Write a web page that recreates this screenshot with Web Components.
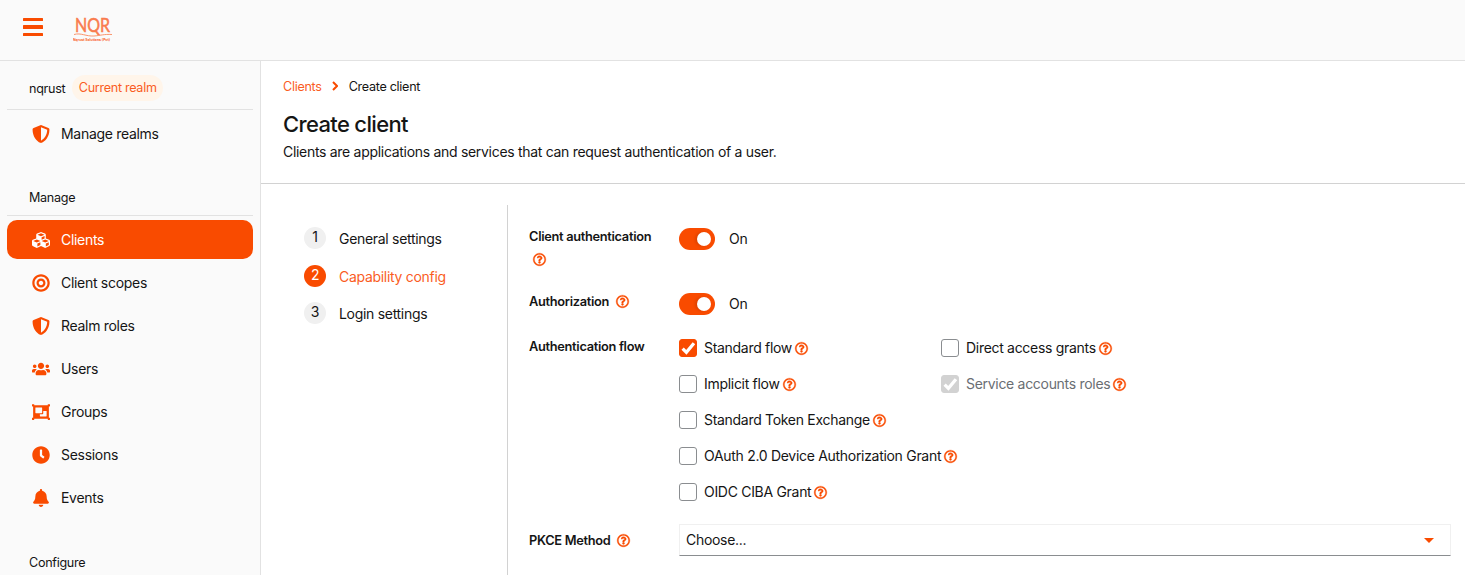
<!DOCTYPE html>
<html lang="en">
<head>
<meta charset="utf-8">
<title>Create client</title>
<style>
  html,body{margin:0;padding:0;height:575px;overflow:hidden;background:#fff}
  body{font:14px/21px Inter,"Liberation Sans",sans-serif;letter-spacing:-.3px;color:#151515;--o:#f94b00}
</style>
</head>
<body>
<app-shell>
  <top-bar slot="top"></top-bar>
  <side-nav slot="side">
    <realm-row name="nqrust" badge="Current realm"></realm-row>
    <nav-item icon="shield" lift>Manage realms</nav-item>
    <nav-heading>Manage</nav-heading>
    <nav-item icon="cubes" active>Clients</nav-item>
    <nav-item icon="bullseye">Client scopes</nav-item>
    <nav-item icon="shield">Realm roles</nav-item>
    <nav-item icon="users">Users</nav-item>
    <nav-item icon="group">Groups</nav-item>
    <nav-item icon="clock">Sessions</nav-item>
    <nav-item icon="bell">Events</nav-item>
    <nav-heading plain>Configure</nav-heading>
  </side-nav>
  <page-head slot="main" title="Create client" desc="Clients are applications and services that can request authentication of a user."></page-head>
  <wizard-body slot="main">
    <wizard-steps slot="steps">
      <wizard-step n="1">General settings</wizard-step>
      <wizard-step n="2" current>Capability config</wizard-step>
      <wizard-step n="3">Login settings</wizard-step>
    </wizard-steps>
    <form-area slot="form">
      <form-row label="Client authentication" tall wrap-help><toggle-switch>On</toggle-switch></form-row>
      <form-row label="Authorization"><toggle-switch>On</toggle-switch></form-row>
      <form-row label="Authentication flow" nohelp>
        <check-grid>
          <check-box checked>Standard flow</check-box>
          <check-box>Direct access grants</check-box>
          <check-box>Implicit flow</check-box>
          <check-box disabled>Service accounts roles</check-box>
          <check-box>Standard Token Exchange</check-box>
          <span></span>
          <check-box>OAuth 2.0 Device Authorization Grant</check-box>
          <span></span>
          <check-box>OIDC CIBA Grant</check-box>
        </check-grid>
      </form-row>
      <form-row label="PKCE Method" field><select-field>Choose...</select-field></form-row>
    </form-area>
  </wizard-body>
</app-shell>
<script>
const ICONS={
 shield:['0 0 512 512','M466.5 83.7l-192-80a48.15 48.15 0 0 0-36.9 0l-192 80C27.7 91.1 16 108.6 16 128c0 198.5 114.5 335.7 221.5 380.3 11.8 4.9 25.1 4.9 36.9 0C360.1 472.6 496 349.3 496 128c0-19.4-11.7-36.9-29.5-44.3zM256.1 446.3l-.1-381 175.9 73.3c-3.3 151.4-82.1 261.1-175.8 307.7z'],
 cubes:['0 0 512 512','M488.6 250.2L392 214V105.5c0-15-9.3-28.4-23.4-33.7l-100-37.5c-8.1-3.1-17.1-3.1-25.3 0l-100 37.5c-14.1 5.3-23.4 18.7-23.4 33.7V214l-96.6 36.2C9.3 255.5 0 268.9 0 283.9V394c0 13.6 7.7 26.1 19.9 32.2l100 50c10.1 5.1 22.1 5.1 32.2 0l103.9-52 103.9 52c10.1 5.1 22.1 5.1 32.2 0l100-50c12.2-6.1 19.9-18.6 19.9-32.2V283.9c0-15-9.3-28.4-23.4-33.7zM358 214.8l-85 31.9v-68.2l85-37v73.3zM154 104.1l102-38.2 102 38.2v.6l-102 41.4-102-41.4v-.6zm84 291.1l-85 42.5v-79.1l85-38.8v75.4zm0-112l-102 41.4-102-41.4v-.6l102-38.2 102 38.2v.6zm240 112l-85 42.5v-79.1l85-38.8v75.4zm0-112l-102 41.4-102-41.4v-.6l102-38.2 102 38.2v.6z'],
 bullseye:['0 0 496 512','M248 8C111.03 8 0 119.03 0 256s111.03 248 248 248 248-111.03 248-248S384.97 8 248 8zm0 432c-101.69 0-184-82.29-184-184 0-101.69 82.29-184 184-184 101.69 0 184 82.29 184 184 0 101.69-82.29 184-184 184zm0-312c-70.69 0-128 57.31-128 128s57.31 128 128 128 128-57.31 128-128-57.31-128-128-128zm0 192c-35.29 0-64-28.71-64-64s28.71-64 64-64 64 28.71 64 64-28.71 64-64 64z'],
 users:['0 0 640 512','M96 224c35.3 0 64-28.7 64-64s-28.7-64-64-64-64 28.7-64 64 28.7 64 64 64zm448 0c35.3 0 64-28.7 64-64s-28.7-64-64-64-64 28.7-64 64 28.7 64 64 64zm32 32h-64c-17.6 0-33.5 7.1-45.1 18.6 40.3 22.1 68.9 62 75.1 109.4h66c17.7 0 32-14.3 32-32v-32c0-35.3-28.7-64-64-64zm-256 0c61.9 0 112-50.1 112-112S381.9 32 320 32 208 82.1 208 144s50.1 112 112 112zm76.8 32h-8.3c-20.8 10-43.9 16-68.5 16s-47.6-6-68.5-16h-8.3C179.6 288 128 339.6 128 403.2V432c0 26.5 21.5 48 48 48h288c26.5 0 48-21.5 48-48v-28.8c0-63.6-51.6-115.2-115.2-115.2zm-223.7-13.4C161.5 263.1 145.6 256 128 256H64c-35.3 0-64 28.7-64 64v32c0 17.7 14.3 32 32 32h65.9c6.3-47.4 34.9-87.3 75.2-109.4z'],
 group:['0 0 512 512','M480 128V96h20c6.627 0 12-5.373 12-12V44c0-6.627-5.373-12-12-12h-40c-6.627 0-12 5.373-12 12v20H64V44c0-6.627-5.373-12-12-12H12C5.373 32 0 37.373 0 44v40c0 6.627 5.373 12 12 12h20v320H12c-6.627 0-12 5.373-12 12v40c0 6.627 5.373 12 12 12h40c6.627 0 12-5.373 12-12v-20h384v20c0 6.627 5.373 12 12 12h40c6.627 0 12-5.373 12-12v-40c0-6.627-5.373-12-12-12h-20V128zM96 276V140c0-6.627 5.373-12 12-12h168c6.627 0 12 5.373 12 12v136c0 6.627-5.373 12-12 12H108c-6.627 0-12-5.373-12-12zm320 96c0 6.627-5.373 12-12 12H236c-6.627 0-12-5.373-12-12v-52h72c13.255 0 24-10.745 24-24v-72h84c6.627 0 12 5.373 12 12v136z'],
 clock:['0 0 512 512','M256,8C119,8,8,119,8,256S119,504,256,504,504,393,504,256,393,8,256,8Zm92.49,313h0l-20,25a16,16,0,0,1-22.49,2.5h0l-67-49.72a40,40,0,0,1-15-31.23V112a16,16,0,0,1,16-16h32a16,16,0,0,1,16,16V256l58,42.5A16,16,0,0,1,348.49,321Z'],
 bell:['0 0 448 512','M224 512c35.32 0 63.97-28.65 63.97-64H160.03c0 35.35 28.65 64 63.97 64zm215.39-149.71c-19.32-20.76-55.47-51.99-55.47-154.29 0-77.7-54.48-139.9-127.94-155.16V32c0-17.67-14.32-32-31.98-32s-31.98 14.33-31.98 32v20.84C118.56 68.1 64.08 130.3 64.08 208c0 102.3-36.15 133.53-55.47 154.29-6 6.45-8.66 14.16-8.61 21.71.11 16.4 12.98 32 32.1 32h383.8c19.12 0 32-15.6 32.1-32 .05-7.55-2.61-15.27-8.61-21.71z'],
 help:['0 0 512 512','M256 8C119.043 8 8 119.083 8 256c0 136.997 111.043 248 248 248s248-111.003 248-248C504 119.083 392.957 8 256 8zm0 448c-110.532 0-200-89.431-200-200 0-110.495 89.472-200 200-200 110.491 0 200 89.471 200 200 0 110.53-89.431 200-200 200zm107.244-255.2c0 67.052-72.421 68.084-72.421 92.863V300c0 6.627-5.373 12-12 12h-45.647c-6.627 0-12-5.373-12-12v-8.659c0-35.745 27.1-50.034 47.579-61.516 17.561-9.845 28.324-16.541 28.324-29.579 0-17.246-21.999-28.693-39.784-28.693-23.189 0-33.894 10.977-48.942 29.969-4.057 5.12-11.46 6.071-16.666 2.124l-27.824-21.098c-5.107-3.872-6.251-11.066-2.644-16.363C184.846 131.491 214.94 112 261.794 112c49.071 0 101.45 38.304 101.45 88.8zM298 368c0 23.159-18.841 42-42 42s-42-18.841-42-42 18.841-42 42-42 42 18.841 42 42z']
};
function def(name,css,html,extra){
  customElements.define(name,class extends HTMLElement{
    constructor(){super();this.attachShadow({mode:'open'})}
    connectedCallback(){
      const h=typeof html==='function'?html(this):html;
      this.shadowRoot.innerHTML='<style>'+css+'</style>'+h;
      if(extra)extra(this);
    }
  });
}
const attr=(el,n)=>el.getAttribute(n)||'';
def('app-icon',':host{display:inline-flex;width:var(--s,18px);height:var(--s,18px);color:var(--c,var(--o));flex:none}svg{width:100%;height:100%;display:block;fill:currentColor;overflow:visible}path{stroke:currentColor;stroke-width:var(--sw,0)}',
  el=>{const i=ICONS[attr(el,'name')];return `<svg viewBox="${i[0]}" aria-hidden="true"><path d="${i[1]}"/></svg>`});
def('help-icon',':host{display:inline-flex;--s:13px;--sw:14;flex:none}','<app-icon name="help"></app-icon>');
def('app-shell',`:host{display:grid;grid-template-columns:261px 1fr;grid-template-rows:61px 514px;height:575px;overflow:hidden}
  .t{grid-column:1/3}.s{overflow:hidden}.m{overflow:hidden;background:#fff}`,
  '<div class="t"><slot name="top"></slot></div><div class="s"><slot name="side"></slot></div><div class="m"><slot name="main"></slot></div>');
def('top-bar',`:host{display:flex;align-items:center;height:61px;box-sizing:border-box;background:#fafafa;border-bottom:1px solid #e2e2e2;padding:0 0 0 23px}
  .b{display:flex;flex-direction:column;gap:4px;width:20px;margin:0 30px 6px 0}
  .b i{display:block;height:3.2px;background:var(--o);border-radius:.5px}
  svg{display:block;width:60px;height:42px}`,
  `<div class="b" role="button" aria-label="Menu"><i></i><i></i><i></i></div>
   <svg viewBox="0 -4 60 42" aria-label="NQR logo">
     <text x="2" y="19" font-family="Lato,sans-serif" font-size="19.5" font-weight="400" fill="#f97c4e" textLength="35" lengthAdjust="spacingAndGlyphs" stroke="#f97c4e" stroke-width=".55" letter-spacing="0">NQR</text>
     <path d="M1 21.5c7-2 12 2 20 1.5 6-.4 10-2 18-1.5" fill="none" stroke="#f98a5e" stroke-width=".9"/>
     <text x="0" y="28" font-family="Inter,sans-serif" font-size="3.6" font-weight="700" fill="#f9632a" textLength="37" lengthAdjust="spacingAndGlyphs" letter-spacing="0">Nqrust Solutions (Pvt)</text>
   </svg>`);
def('side-nav',`:host{display:flex;flex-direction:column;gap:4px;width:261px;height:514px;box-sizing:border-box;background:#fafafa;border-right:1px solid #e2e2e2;padding:0 7px;overflow:hidden}
  ::slotted(*){flex:none}`,'<slot></slot>');
def('realm-row',`:host{display:flex;align-items:center;gap:7px;padding:14px 0 8px 22px;border-bottom:1px solid #e2e2e2;height:26px;box-sizing:content-box;font-size:12.6px}
  b{font-weight:400;color:#fa5d1f;background:#fff5ea;border-radius:13px;height:26px;line-height:26px;padding:0 6.5px}`,
  el=>`<span>${attr(el,'name')}</span><b>${attr(el,'badge')}</b>`);
def('nav-heading',`:host{display:block;font-size:12.6px}
  div{display:flex;align-items:flex-end;height:59px;padding:0 0 7px 22px;box-sizing:border-box;border-bottom:1px solid #e2e2e2}
  :host([plain]) div{border:0;height:53px;padding-bottom:1px}`,'<div><slot></slot></div>');
def('nav-item',`:host{display:flex;align-items:center;height:39px;border-radius:10px;padding-left:25px;gap:11px;color:#151515;--s:18px}
  :host([active]){background:var(--o);color:#fff;--c:#fff}
  :host([lift]) span{padding-bottom:1px}`,
  el=>`<app-icon name="${attr(el,'icon')}"></app-icon><span><slot></slot></span>`);
def('page-head',`:host{display:block;padding:14.5px 20px 21.5px 22px;border-bottom:1px solid #d2d2d2}
  nav{display:flex;align-items:center;height:21px;font-size:12.6px}
  a{color:#fa5d1f}
  svg{width:6px;height:10px;margin:0 11px 0 10px;fill:none;stroke:var(--o);stroke-width:2}
  h1{font:500 22px/31px Inter,sans-serif;letter-spacing:-.65px;margin:12px 0 0;color:#151515}
  p{margin:1px 0 0;color:#151515}`,
  el=>`<nav><a>Clients</a><svg viewBox="0 0 6 10"><path d="M1 1l4 4-4 4"/></svg><span>Create client</span></nav><h1>${attr(el,'title')}</h1><p>${attr(el,'desc')}</p>`);
def('wizard-body',`:host{display:grid;grid-template-columns:247px 1fr;margin-top:21px;height:400px}
  .a{border-right:1px solid #d2d2d2}`,
  '<div class="a"><slot name="steps"></slot></div><div><slot name="form"></slot></div>');
def('wizard-steps',`:host{display:flex;flex-direction:column;gap:13.5px;padding:22px 0 0 43px}`,'<slot></slot>');
def('wizard-step',`:host{display:flex;height:24px;line-height:24px;gap:13px}
  i{font-style:normal;display:flex;align-items:center;justify-content:center;width:22px;height:22px;border-radius:50%;background:#f0f0f0;color:#151515;line-height:20px;padding-bottom:2px;box-sizing:border-box}
  :host([current]) i{background:var(--o);color:#fff}
  :host([current]) span{color:#fa5d1f}`,
  el=>`<i>${attr(el,'n')}</i><span><slot></slot></span>`);
def('form-area',`:host{display:flex;flex-direction:column;gap:19px;padding:20px 14px 0 21px}`,'<slot></slot>');
def('form-row',`:host{display:grid;grid-template-columns:150px minmax(0,1fr);min-height:26px}
  :host([tall]){min-height:46px}
  .l{font-weight:600;font-size:12.8px;line-height:21px;display:block;padding-top:1px}
  .l help-icon{margin-left:7px;vertical-align:-2px}
  .wrap help-icon{display:flex;margin:6px 0 0 4px}
  .c{padding-top:3px}
  :host([nohelp]) .c{padding-top:0}
  :host([field]) .l{padding-top:6px}
  :host([field]) .c{padding-top:0}`,
  el=>{const help=el.hasAttribute('nohelp')?'':'<help-icon></help-icon>';
    return `<div class="l ${el.hasAttribute('wrap-help')?'wrap':''}">${attr(el,'label')}${help}</div><div class="c"><slot></slot></div>`});
def('toggle-switch',`:host{display:flex;align-items:center;gap:14px;height:22px}
  i{display:block;position:relative;width:36px;height:22px;border-radius:11px;background:var(--o)}
  i::after{content:"";position:absolute;left:18px;top:4px;width:14px;height:14px;border-radius:50%;background:#fff;box-shadow:-2px 0 3px rgba(0,0,0,.12)}
  span{padding-bottom:2px}`,
  '<i></i><span><slot></slot></span>');
def('check-grid',`:host{display:grid;grid-template-columns:262px auto;row-gap:10px}`,'<slot></slot>');
def('check-box',`:host{display:flex;align-items:center;height:26px;gap:7px;white-space:nowrap}
  i{display:flex;align-items:center;justify-content:center;width:18px;height:18px;box-sizing:border-box;border:1px solid #8a8d90;border-radius:3px;background:#fff;flex:none}
  svg{display:none;width:14px;height:14px;fill:none;stroke:#fff;stroke-width:3}
  :host([checked]) i{background:var(--o);border-color:var(--o)}
  :host([checked]) svg,:host([disabled]) svg{display:block}
  :host([disabled]) i{background:#d2d2d2;border-color:#d2d2d2}
  :host([disabled]) span{color:#6a6e73}
  span{display:flex;align-items:center;gap:3px;padding-bottom:2px}
  help-icon{margin-top:2px}`,
  '<i><svg viewBox="0 0 13 13"><path d="M1.5 7l3.5 3.5 7-8.5"/></svg></i><span><slot></slot><help-icon></help-icon></span>');
def('select-field',`:host{display:flex;align-items:center;justify-content:space-between;height:32px;box-sizing:border-box;border:1px solid #f0f0f0;border-bottom:1px solid #8a8d90;padding:0 16px 0 6px;background:#fff}
  span{padding-bottom:2px}
  i{display:block;width:0;height:0;border-left:5px solid transparent;border-right:5px solid transparent;border-top:5px solid var(--o)}`,
  '<span><slot></slot></span><i></i>');
</script>
</body>
</html>
